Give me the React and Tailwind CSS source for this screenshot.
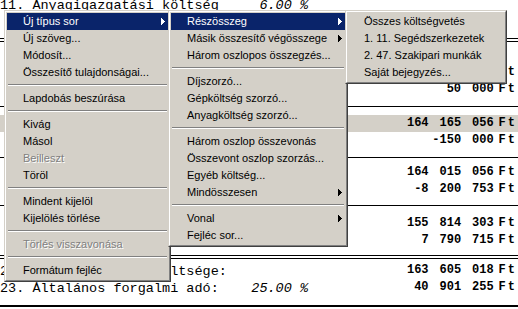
import React from "react";

// context menu of a cost estimate sheet (Windows 2000 classic look)

const mainItems = [
  { label: "Új típus sor", active: true, arrow: true },
  { label: "Új szöveg..." },
  { label: "Módosít..." },
  { label: "Összesítő tulajdonságai..." },
  { sep: true },
  { label: "Lapdobás beszúrása" },
  { sep: true },
  { label: "Kivág" },
  { label: "Másol" },
  { label: "Beilleszt", disabled: true },
  { label: "Töröl" },
  { sep: true },
  { label: "Mindent kijelöl" },
  { label: "Kijelölés törlése" },
  { sep: true },
  { label: "Törlés visszavonása", disabled: true },
  { sep: true },
  { label: "Formátum fejléc" },
];

const typeItems = [
  { label: "Részösszeg", active: true, arrow: true },
  { label: "Másik összesítő végösszege", arrow: true },
  { label: "Három oszlopos összegzés..." },
  { sep: true },
  { label: "Díjszorzó..." },
  { label: "Gépköltség szorzó..." },
  { label: "Anyagköltség szorzó..." },
  { sep: true },
  { label: "Három oszlop összevonás" },
  { label: "Összevont oszlop szorzás..." },
  { label: "Egyéb költség..." },
  { label: "Mindösszesen", arrow: true },
  { sep: true },
  { label: "Vonal", arrow: true },
  { label: "Fejléc sor..." },
];

const sumItems = [
  { label: "Összes költségvetés" },
  { label: "1. 11. Segédszerkezetek" },
  { label: "2. 47. Szakipari munkák" },
  { label: "Saját bejegyzés..." },
];

function Arrow({ white }) {
  return (
    <svg width="4" height="7" viewBox="0 0 4 7" shapeRendering="crispEdges" className="ml-auto mr-[3px] shrink-0">
      <path d="M0 0h1v7h-1z M1 1h1v5h-1z M2 2h1v3h-1z M3 3h1v1h-1z" fill={white ? "#fff" : "#000"} />
    </svg>
  );
}

function Menu({ items, className }) {
  return (
    <div
      className={`absolute bg-[#d4d0c8] border border-t-[#d4d0c8] border-l-[#d4d0c8] border-r-[#404040] border-b-[#404040] font-['Liberation_Sans',Arial,sans-serif] text-[11px] ${className}`}
    >
      <div className="border border-t-white border-l-white border-r-[#808080] border-b-[#808080] p-px">
        {items.map((it, i) =>
          it.sep ? (
            <div key={i} className="h-[9px] pt-[3px] px-px">
              <div className="border-t border-t-[#808080] border-b border-b-white" />
            </div>
          ) : (
            <div
              key={i}
              className={`h-[17px] flex items-center pl-[16px] ${
                it.active
                  ? "bg-[#0a246a] text-white"
                  : it.disabled
                  ? "text-[#808080] [text-shadow:1px_1px_0_#fff]"
                  : "text-black"
              }`}
            >
              <span className="whitespace-nowrap">{it.label}</span>
              {it.arrow && <Arrow white={it.active} />}
            </div>
          )
        )}
      </div>
    </div>
  );
}

function Amount({ value }) {
  return (
    <div className="ml-auto pr-[1px] flex font-['Liberation_Mono',monospace] font-bold text-[12px] leading-[17px] text-black whitespace-pre">
      <span className="[word-spacing:3.7px]">{value}</span>
      <span className="ml-[5px] tracking-[2px]">Ft</span>
    </div>
  );
}

function Label({ text, pct, pad }) {
  return (
    <div
      className={`w-[308px] flex justify-between font-['Liberation_Mono',monospace] text-[13.5px] leading-[17px] text-black whitespace-pre ${
        pad ? "pt-px" : ""
      }`}
    >
      <span>{text}</span>
      {pct && <span className="italic">{pct}</span>}
    </div>
  );
}

function Row({ label, pct, amount, gray, pad, h = "h-[17px]" }) {
  return (
    <div className={`${h} flex items-start ${gray ? "bg-[#d4d0c8]" : ""}`}>
      {label && <Label text={label} pct={pct} pad={pad} />}
      {amount && <Amount value={amount} />}
    </div>
  );
}

function Rule({ h, pt, double, thick }) {
  return (
    <div className={`${h} ${pt}`}>
      <div className={`${thick ? "h-[2px]" : "h-px"} bg-black`} />
      {double && <div className="h-px bg-black mt-[2px]" />}
    </div>
  );
}

export default function App() {
  return (
    <div className="relative w-[518px] h-[309px] overflow-hidden bg-white">
      {/* sheet content */}
      <div className="flex flex-col mt-[-3px]">
        <Row label="11. Anyagigazgatási költség" pct="6.00 %" />
        <Row />
        <Rule h="h-[17px]" pt="pt-[7px]" double />
        <Row h="h-[16px]" />
        <Row amount="2 450 000" />
        <Row amount="50 000" />
        <Rule h="h-[17px]" pt="pt-[8px]" />
        <Row amount="164 165 056" gray />
        <Row amount="-150 000" />
        <Rule h="h-[15px]" pt="pt-[8px]" />
        <Row amount="164 015 056" />
        <Row amount="-8 200 753" />
        <Rule h="h-[17px]" pt="pt-[7px]" />
        <Row amount="155 814 303" />
        <Row amount="7 790 715" />
        <Rule h="h-[13px]" pt="pt-[6px]" double />
        <Row label="22. Építési teljes költsége:" amount="163 605 018" pad />
        <Row label="23. Általános forgalmi adó:" pct="25.00 %" amount="40 901 255" pad />
        <Rule h="h-[13px]" pt="pt-[9px]" thick />
      </div>

      {/* popup menus */}
      <Menu items={mainItems} className="left-[4px] top-[10px] w-[167px]" />
      <Menu items={typeItems} className="left-[168px] top-[10px] w-[180px]" />
      <Menu items={sumItems} className="left-[345px] top-[10px] w-[162px]" />
    </div>
  );
}
